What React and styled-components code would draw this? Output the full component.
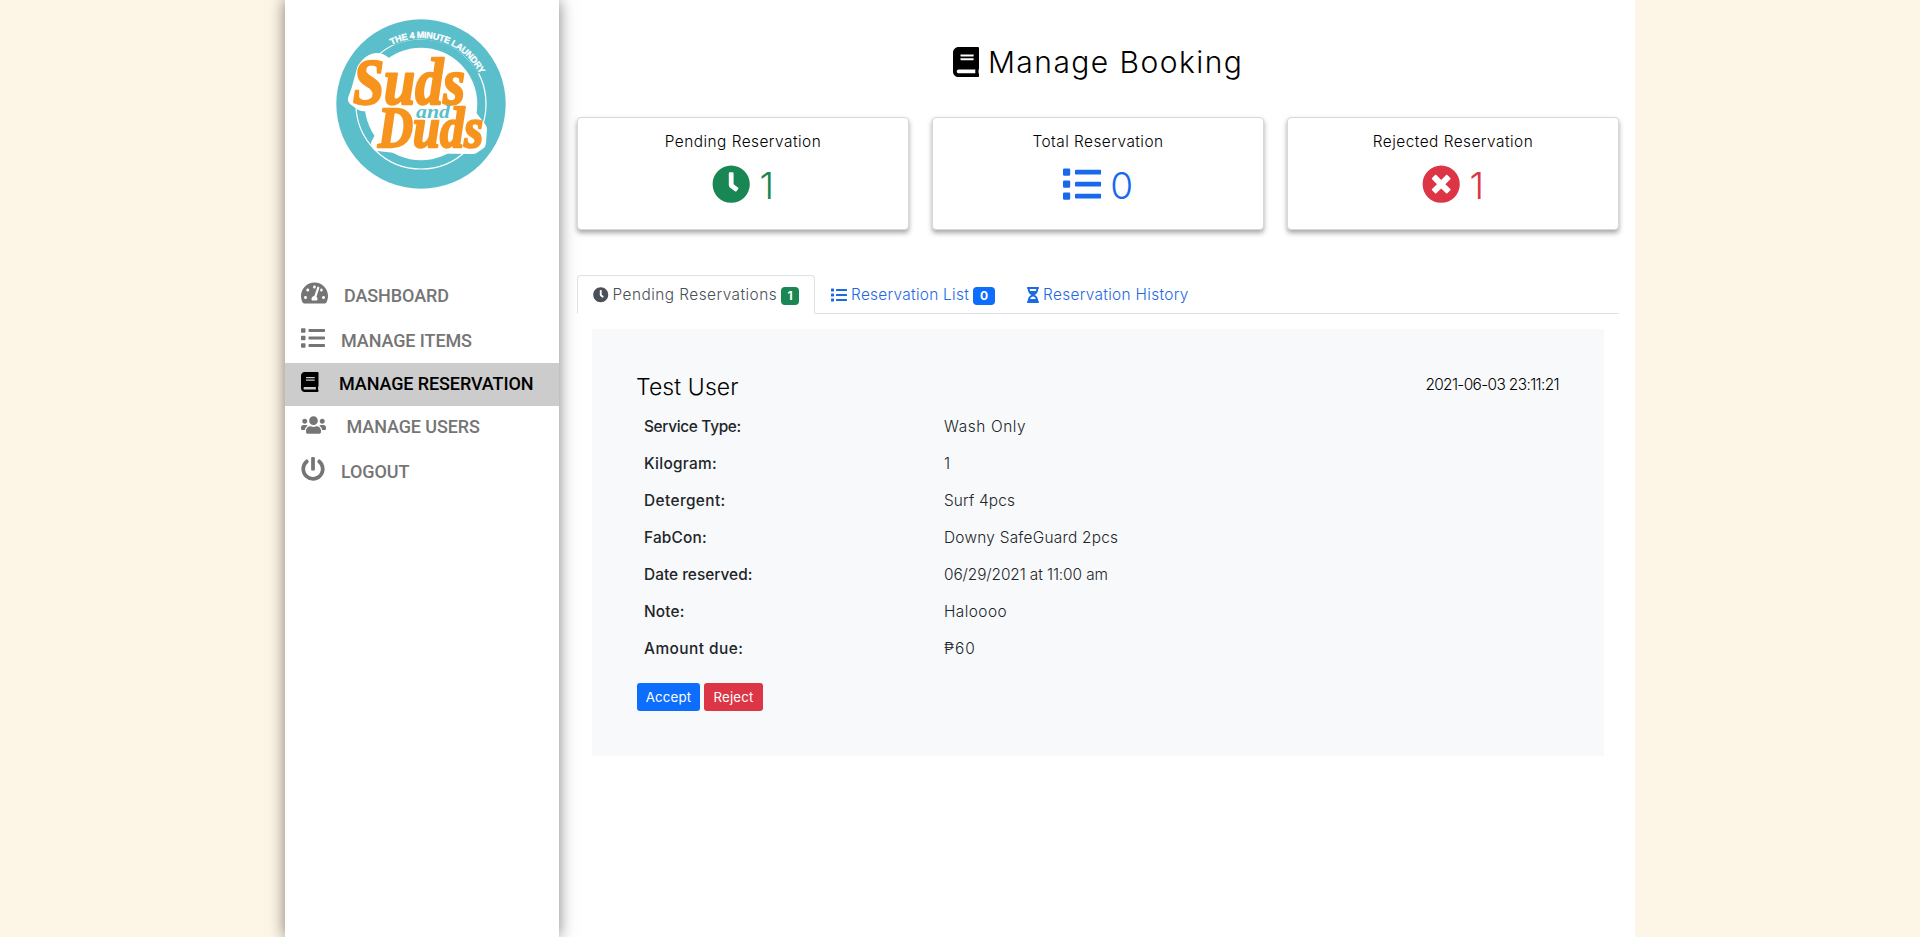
import React from "react";
import styled, { createGlobalStyle } from "styled-components";
import {
  FaBook,
  FaClock,
  FaList,
  FaTimesCircle,
  FaHourglassHalf,
  FaTachometerAlt,
  FaUsers,
  FaPowerOff,
} from "react-icons/fa";

const GlobalStyle = createGlobalStyle`
  *, *::before, *::after { box-sizing: border-box; }
  body {
    margin: 0;
    background: #fdf5e6;
    color: #212529;
    font-family: Inter, "Liberation Sans", sans-serif;
    font-size: 15.4px;
    font-weight: 300;
    line-height: 24px;
  }
  svg { display: block; flex: none; }
`;

const Page = styled.div`
  display: flex;
  width: 1350px;
  height: 937px;
  margin: 0 auto;
  background: #fff;
`;

const Sidebar = styled.aside`
  width: 274px;
  flex: none;
  background: #fff;
  box-shadow: 0 0 15px rgba(0, 0, 0, 0.5);
`;

const LogoWrap = styled.div`
  display: flex;
  justify-content: center;
  height: 270px;
  padding: 15px 2px 0 0;
`;

const Nav = styled.nav`
  display: flex;
  flex-direction: column;
`;

const NavLink = styled.a`
  display: flex;
  align-items: flex-start;
  height: ${(p) => p.$height}px;
  padding: ${(p) => p.$top}px 0 0 16px;
  background: ${(p) => (p.$active ? "#ccc" : "transparent")};
  color: ${(p) => (p.$active ? "#000" : "#757575")};
  font: 500 18px/24px Roboto, sans-serif;
  letter-spacing: -0.1px;
`;

const NavIcon = styled.span`
  width: ${(p) => p.$width}px;
  flex: none;
  font-size: ${(p) => p.$size}px;

  svg { width: ${(p) => p.$ratio}em; height: 1em; }
`;

const NavText = styled.span`
  padding-top: ${(p) => p.$drop}px;
`;

const Main = styled.main`
  flex: 1;
  padding: 44px 16px 0 18px;
`;

const Title = styled.h1`
  display: flex;
  align-items: center;
  justify-content: center;
  gap: 9px;
  height: 36px;
  margin: 0 0 37px;
  color: #000;
  font-size: 30px;
  font-weight: 300;
  letter-spacing: 1.45px;

  svg { width: 0.875em; height: 1em; }
`;

const Cards = styled.section`
  display: grid;
  grid-template-columns: repeat(3, 1fr);
  gap: 23px;
`;

const Card = styled.article`
  display: flex;
  flex-direction: column;
  align-items: center;
  height: 113px;
  padding-top: 12px;
  border: 1px solid #d8d8d8;
  border-radius: 4px;
  background: #fff;
  box-shadow: 0 3px 5px rgba(0, 0, 0, 0.35);
`;

const CardLabel = styled.div`
  color: #000;
  letter-spacing: 0.47px;
`;

const CardValue = styled.div`
  display: flex;
  align-items: center;
  gap: 9px;
  margin-top: 9px;
  color: ${(p) => p.$color};
  font-size: 37px;
  line-height: 46px;

  svg { margin-top: -3px; }
`;

const Tabs = styled.div`
  display: flex;
  height: 39px;
  margin-top: 45px;
  border-bottom: 1px solid #dee2e6;
`;

const Tab = styled.a`
  display: flex;
  align-items: flex-start;
  height: 39px;
  padding: 7px 15px 0;
  border: 1px solid ${(p) => (p.$active ? "#dee2e6" : "transparent")};
  border-bottom-color: ${(p) => (p.$active ? "#fff" : "transparent")};
  border-radius: 4px 4px 0 0;
  background: ${(p) => (p.$active ? "#fff" : "transparent")};
  color: ${(p) => (p.$active ? "#495057" : "#1c69e4")};

  svg { width: ${(p) => p.$iconWidth || 16}px; margin: 4px 4px 0 0; }
`;

const TabText = styled.span`
  letter-spacing: ${(p) => p.$spacing}px;
`;

const Badge = styled.span`
  display: flex;
  align-items: center;
  justify-content: center;
  width: ${(p) => p.$width}px;
  height: 18px;
  margin: 4px 0 0 4px;
  border-radius: 4px;
  background: ${(p) => p.$color};
  color: #fff;
  font-size: 12px;
  font-weight: 700;
  line-height: 18px;
`;

const Panel = styled.section`
  height: 427px;
  margin: 15px 15px 0;
  padding: 43px 45px 0;
  background: #f8f9fa;
`;

const PanelHead = styled.header`
  display: flex;
  justify-content: space-between;
  height: 45px;
  color: #000;
`;

const Customer = styled.h2`
  margin: 0 0 0 -1px;
  font-size: 23px;
  font-weight: 300;
  line-height: 30px;
  letter-spacing: 0.1px;
`;

const Stamp = styled.time`
  padding-top: 1px;
  letter-spacing: -0.62px;
`;

const Details = styled.dl`
  margin: 0;
  padding-left: 7px;
`;

const Detail = styled.div`
  display: grid;
  grid-template-columns: 300px 1fr;
  height: 37px;
  line-height: 20px;
`;

const Term = styled.dt`
  font-weight: 500;
  letter-spacing: ${(p) => p.$spacing}px;
`;

const Value = styled.dd`
  margin: 0;
  letter-spacing: ${(p) => p.$spacing}px;
`;

const Actions = styled.div`
  display: flex;
  gap: 4px;
  margin-top: 7px;
`;

const Button = styled.button`
  width: ${(p) => p.$width}px;
  height: 28px;
  padding: 0;
  border: 0;
  border-radius: 3px;
  background: ${(p) => p.$color};
  color: #fff;
  font: 400 13.3px/26px Inter, sans-serif;
  letter-spacing: 0.15px;
`;

const LogoSvg = styled.svg`
  overflow: visible;
  font-family: "Liberation Serif", serif;
  font-weight: 700;
  font-style: italic;
`;

function Logo() {
  return (
    <LogoSvg width="170" height="178" viewBox="0 0 170 178">
      <defs>
        <path id="arc" d="M 19 89 A 66 66 0 0 1 151 89" />
      </defs>
      <circle cx="85" cy="89" r="84.7" fill="#5bbecb" />
      <circle cx="85" cy="89" r="65" fill="none" stroke="#fff" strokeWidth="1.2" />
      <circle cx="85" cy="89" r="56.3" fill="#fff" />
      <path d="M 57 29 A 66 66 0 0 1 143 58" fill="none" stroke="#5bbecb" strokeWidth="3" />
      <text fill="#fff" stroke="#fff" strokeWidth="0.3" fontFamily="Liberation Sans" fontStyle="normal" fontSize="9">
        <textPath href="#arc" startOffset="73" textLength="103">THE 4 MINUTE LAUNDRY</textPath>
      </text>
      <g fill="#fff" stroke="#fff" strokeWidth="14" strokeLinejoin="round">
        <path d="M 19 84 L 22 76 L 28 54 Q 38 40 48 48 L 60 60 L 112 50 L 124 84 L 60 92 L 26 89 Z" />
        <path d="M 42 129 L 50 114 L 60 98 L 130 96 L 144 114 L 143 128 L 137 132 L 60 131 Z" />
      </g>
      <g fill="#f7941d" stroke="#f7941d" strokeWidth="2.4" strokeLinejoin="round">
        <text x="17" y="89" fontSize="66" textLength="112" lengthAdjust="spacingAndGlyphs">Suds</text>
        <text x="42" y="132" fontSize="56" textLength="105" lengthAdjust="spacingAndGlyphs">Duds</text>
      </g>
      <text x="80" y="103" fontSize="19" fill="#5bbecb" textLength="34" lengthAdjust="spacingAndGlyphs">and</text>
    </LogoSvg>
  );
}

const NAV = [
  { label: "DASHBOARD", Icon: FaTachometerAlt, size: 24, ratio: 1.125, height: 46, top: 11, iconWidth: 43, drop: 3 },
  { label: "MANAGE ITEMS", Icon: FaList, size: 24, ratio: 1, height: 47, top: 10, iconWidth: 40, drop: 3 },
  { label: "MANAGE RESERVATION", Icon: FaBook, size: 20, ratio: 0.875, height: 43, top: 9, iconWidth: 38, drop: 0, active: true },
  { label: "MANAGE USERS", Icon: FaUsers, size: 20, ratio: 1.25, height: 43, top: 9, iconWidth: 45.5, drop: 0 },
  { label: "LOGOUT", Icon: FaPowerOff, size: 24, ratio: 1, height: 46, top: 8, iconWidth: 40, drop: 3 },
];

const CARDS = [
  { label: "Pending Reservation", value: 1, color: "#198754", Icon: FaClock },
  { label: "Total Reservation", value: 0, color: "#1769ee", Icon: FaList },
  { label: "Rejected Reservation", value: 1, color: "#dc3545", Icon: FaTimesCircle },
];

const DETAILS = [
  ["Service Type:", -0.32, "Wash Only", 0.6],
  ["Kilogram:", 0.3, "1", 0],
  ["Detergent:", 0.4, "Surf 4pcs", 0.15],
  ["FabCon:", 0.2, "Downy SafeGuard 2pcs", 0.25],
  ["Date reserved:", 0.02, "06/29/2021 at 11:00 am", -0.1],
  ["Note:", 0.2, "Haloooo", 0.45],
  ["Amount due:", 0.48, "₱60", 1],
];

export default function App() {
  return (
    <>
      <GlobalStyle />
      <Page>
        <Sidebar>
          <LogoWrap>
            <Logo />
          </LogoWrap>
          <Nav>
            {NAV.map(({ label, Icon, size, ratio, height, top, iconWidth, drop, active }) => (
              <NavLink key={label} $height={height} $top={top} $active={active}>
                <NavIcon $width={iconWidth} $size={size} $ratio={ratio}>
                  <Icon />
                </NavIcon>
                <NavText $drop={drop}>{label}</NavText>
              </NavLink>
            ))}
          </Nav>
        </Sidebar>
        <Main>
          <Title>
            <FaBook />
            Manage Booking
          </Title>
          <Cards>
            {CARDS.map(({ label, value, color, Icon }) => (
              <Card key={label}>
                <CardLabel>{label}</CardLabel>
                <CardValue $color={color}>
                  <Icon size={38.4} />
                  {value}
                </CardValue>
              </Card>
            ))}
          </Cards>
          <Tabs>
            <Tab $active $iconWidth={15.5}>
              <FaClock size={15.5} />
              <TabText $spacing={0.46}>Pending Reservations</TabText>
              <Badge $width={18} $color="#198754">1</Badge>
            </Tab>
            <Tab>
              <FaList size={16} />
              <TabText $spacing={0.28}>Reservation List</TabText>
              <Badge $width={22} $color="#0d6efd">0</Badge>
            </Tab>
            <Tab $iconWidth={12}>
              <FaHourglassHalf size={16} />
              <TabText $spacing={0.32}>Reservation History</TabText>
            </Tab>
          </Tabs>
          <Panel>
            <PanelHead>
              <Customer>Test User</Customer>
              <Stamp>2021-06-03 23:11:21</Stamp>
            </PanelHead>
            <Details>
              {DETAILS.map(([term, termSpacing, value, valueSpacing]) => (
                <Detail key={term}>
                  <Term $spacing={termSpacing}>{term}</Term>
                  <Value $spacing={valueSpacing}>{value}</Value>
                </Detail>
              ))}
            </Details>
            <Actions>
              <Button $width={63} $color="#0d6efd">Accept</Button>
              <Button $width={59} $color="#dc3545">Reject</Button>
            </Actions>
          </Panel>
        </Main>
      </Page>
    </>
  );
}
